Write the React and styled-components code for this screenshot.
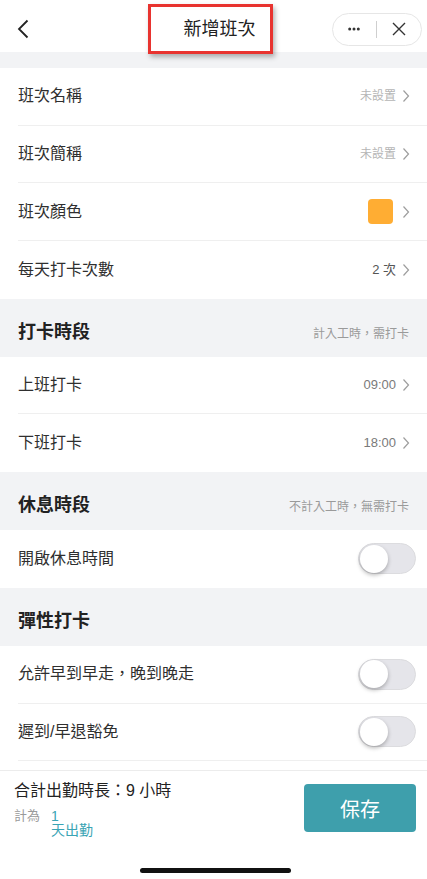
import React from "react";
import styled, { createGlobalStyle } from "styled-components";

const Global = createGlobalStyle`
  html, body { margin: 0; padding: 0; background: #fff; }
  body { font-family: "Liberation Sans", "Noto Sans CJK TC", sans-serif; -webkit-font-smoothing: antialiased; }
  * { box-sizing: border-box; }
`;

const Page = styled.div`
  height: 100vh;
  display: flex;
  flex-direction: column;
  overflow: hidden;
  background: #fff;
`;

const NavBar = styled.div`
  position: relative;
  height: 52px;
  flex-shrink: 0;
  display: grid;
  grid-template-columns: 1fr auto 1fr;
  align-items: center;
  padding: 6px 5px 0 17px;
`;

const BackBtn = styled.div`
  display: flex;
  align-items: center;
  justify-self: start;
`;

const Title = styled.div`
  font-size: 18px;
  line-height: 24px;
  color: #222;
`;

const Highlight = styled.div`
  position: absolute;
  left: 148px;
  top: 4px;
  width: 125px;
  height: 50px;
  border: 3px solid #e8332f;
  box-shadow: 2px 3px 5px rgba(0, 0, 0, 0.3);
  pointer-events: none;
  z-index: 2;
`;

const Capsule = styled.div`
  justify-self: end;
  width: 90px;
  height: 33px;
  border: 1px solid #e6e6e6;
  border-radius: 17px;
  background: #fff;
  display: flex;
  align-items: center;
  padding: 0 0 0 15px;
`;

const CapDivider = styled.span`
  width: 1px;
  height: 17px;
  background: #cfcfcf;
  margin: 0 15px 0 16px;
`;

const Spacer = styled.div`
  height: 16px;
  background: #f2f3f5;
  flex-shrink: 0;
`;

const Body = styled.div`
  flex: 1;
  overflow: hidden;
`;

const Row = styled.div`
  height: 57.7px;
  margin-left: 18px;
  padding-right: ${(p) => (p.$toggle ? "11px" : "17px")};
  display: flex;
  align-items: center;
  justify-content: space-between;
  border-bottom: ${(p) => (p.$noLine ? "none" : "1px solid #efefef")};
`;

const Label = styled.span`
  font-size: 16px;
  line-height: 22px;
  color: #2f2f2f;
`;

const ValueWrap = styled.span`
  display: flex;
  align-items: center;
  gap: 6px;
`;

const Value = styled.span`
  font-size: ${(p) => (p.$muted ? "12px" : "13px")};
  line-height: 16px;
  color: ${(p) => (p.$muted ? "#b5b5b5" : p.$dark ? "#555" : "#7a7a7a")};
`;

const Swatch = styled.span`
  width: 25px;
  height: 25px;
  border-radius: 4px;
  background: ${(p) => p.$color};
  margin-right: 3px;
`;

const SectionHeader = styled.div`
  height: 58px;
  background: #f2f3f5;
  display: flex;
  align-items: baseline;
  justify-content: space-between;
  padding: 21px 18px 0 18px;
`;

const SectionTitle = styled.span`
  font-size: 18px;
  line-height: 24px;
  font-weight: 700;
  color: #222;
`;

const SectionNote = styled.span`
  font-size: 12px;
  line-height: 16px;
  color: #9a9a9a;
`;

const Track = styled.span`
  width: 58px;
  height: 31px;
  border-radius: 16px;
  background: #e5e5ea;
  border: 1px solid #dcdcdf;
  display: flex;
  align-items: center;
  padding: 0 1px;
`;

const Knob = styled.span`
  width: 28px;
  height: 28px;
  border-radius: 50%;
  background: #fff;
  box-shadow: 0 2px 4px rgba(0, 0, 0, 0.28);
`;

const Footer = styled.div`
  height: 109px;
  flex-shrink: 0;
  border-top: 1px solid #ececec;
  display: flex;
  flex-direction: column;
  padding: 10px 11px 0 14px;
`;

const FooterMain = styled.div`
  display: flex;
  justify-content: space-between;
  align-items: flex-start;
`;

const Summary = styled.div`
  display: flex;
  flex-direction: column;
`;

const Total = styled.div`
  font-size: 16px;
  line-height: 20px;
  color: #222;
`;

const SubLine = styled.div`
  display: flex;
  gap: 11px;
  margin-top: 8px;
`;

const SubLabel = styled.span`
  font-size: 13px;
  line-height: 14px;
  color: #9a9a9a;
`;

const SubValue = styled.span`
  white-space: pre-line;
  font-size: 14px;
  line-height: 14px;
  color: #3aa4b4;
`;

const SaveButton = styled.button`
  margin-top: 3px;
  width: 112px;
  height: 48px;
  border: none;
  border-radius: 4px;
  background: #3e9fac;
  color: #fff;
  font-family: inherit;
  font-size: 20px;
  cursor: pointer;
`;

const HomeBar = styled.div`
  margin: auto auto 6px;
  width: 151px;
  height: 5px;
  border-radius: 3px;
  background: #111;
`;

const Chevron = () => (
  <svg width="8" height="14" viewBox="0 0 8 14">
    <polyline points="1.5,1.5 6.5,7 1.5,12.5" fill="none" stroke="#9d9d9d" strokeWidth="1.2" />
  </svg>
);

const Toggle = () => (
  <Track>
    <Knob />
  </Track>
);

const NavRow = ({ label, children, noLine }) => (
  <Row $noLine={noLine}>
    <Label>{label}</Label>
    <ValueWrap>
      {children}
      <Chevron />
    </ValueWrap>
  </Row>
);

const ToggleRow = ({ label, noLine }) => (
  <Row $toggle $noLine={noLine}>
    <Label>{label}</Label>
    <Toggle />
  </Row>
);

export default function App() {
  return (
    <>
      <Global />
      <Page>
        <NavBar>
          <BackBtn>
            <svg width="12" height="20" viewBox="0 0 12 20">
              <polyline points="10.5,1.5 2,10 10.5,18.5" fill="none" stroke="#222" strokeWidth="1.8" />
            </svg>
          </BackBtn>
          <Title>新增班次</Title>
          <Capsule>
            <svg width="12" height="4" viewBox="0 0 12 4">
              <circle cx="1.7" cy="2" r="1.5" fill="#333" />
              <circle cx="6" cy="2" r="1.5" fill="#333" />
              <circle cx="10.3" cy="2" r="1.5" fill="#333" />
            </svg>
            <CapDivider />
            <svg width="14" height="14" viewBox="0 0 14 14">
              <path d="M1 1 L13 13 M13 1 L1 13" stroke="#333" strokeWidth="1.4" fill="none" />
            </svg>
          </Capsule>
          <Highlight />
        </NavBar>
        <Spacer />
        <Body>
          <NavRow label="班次名稱">
            <Value $muted>未設置</Value>
          </NavRow>
          <NavRow label="班次簡稱">
            <Value $muted>未設置</Value>
          </NavRow>
          <NavRow label="班次顏色">
            <Swatch $color="#ffad33" />
          </NavRow>
          <NavRow label="每天打卡次數" noLine>
            <Value $dark>2 次</Value>
          </NavRow>

          <SectionHeader>
            <SectionTitle>打卡時段</SectionTitle>
            <SectionNote>計入工時，需打卡</SectionNote>
          </SectionHeader>
          <NavRow label="上班打卡">
            <Value>09:00</Value>
          </NavRow>
          <NavRow label="下班打卡" noLine>
            <Value>18:00</Value>
          </NavRow>

          <SectionHeader>
            <SectionTitle>休息時段</SectionTitle>
            <SectionNote>不計入工時，無需打卡</SectionNote>
          </SectionHeader>
          <ToggleRow label="開啟休息時間" noLine />

          <SectionHeader>
            <SectionTitle>彈性打卡</SectionTitle>
          </SectionHeader>
          <ToggleRow label="允許早到早走，晚到晚走" />
          <ToggleRow label="遲到/早退豁免" />
        </Body>
        <Footer>
          <FooterMain>
            <Summary>
              <Total>合計出勤時長：9 小時</Total>
              <SubLine>
                <SubLabel>計為</SubLabel>
                <SubValue>{"1\n天出勤"}</SubValue>
              </SubLine>
            </Summary>
            <SaveButton>保存</SaveButton>
          </FooterMain>
          <HomeBar />
        </Footer>
      </Page>
    </>
  );
}
